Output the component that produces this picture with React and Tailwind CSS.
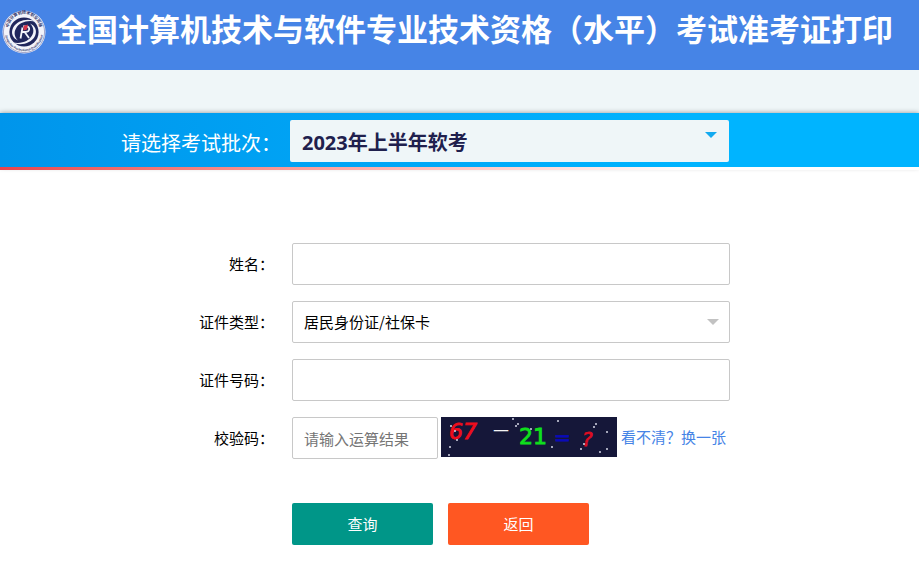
import { useState } from 'react';

const FIELD = 'block w-full h-[42px] rounded-xs border border-[#c8c8c8] bg-white px-[11px] text-black outline-none focus:border-[#8f8f8f] placeholder:text-[#757575]';

const STARS = [
  [72, 2], [77, 7], [75, 9], [10, 9], [14, 14], [16, 23], [9, 30], [8, 38],
  [117, 4], [90, 12], [111, 30], [155, 7], [153, 10], [166, 15], [143, 27],
  [140, 32], [159, 35], [166, 32],
];

function Emblem() {
  return (
    <svg viewBox="0 0 44 44" className="w-11 h-11 shrink-0" aria-hidden="true">
      <defs>
        <path id="ring-top" d="M7 24 A15.6 15.6 0 1 1 37 24" />
        <path id="ring-bottom" d="M2.8 22 A19.2 19.2 0 0 0 41.2 22" />
      </defs>
      <circle cx="22" cy="22" r="21.5" fill="#f2f3fa" />
      <circle cx="22" cy="22" r="20.6" fill="none" stroke="#7e84b4" strokeWidth="0.7" />
      <g fill="#33376b" fontFamily="'Noto Sans CJK SC', sans-serif" fontWeight="700">
        <text fontSize="4">
          <textPath href="#ring-top" startOffset="50%" textAnchor="middle">中国计算机技术职业资格</textPath>
        </text>
        <text fontSize="3">
          <textPath href="#ring-bottom" startOffset="50%" textAnchor="middle">Computer Professional Qualification</textPath>
        </text>
      </g>
      <circle cx="22" cy="22" r="14.6" fill="#20265c" />
      <path d="M34 12C27 7.500 15 10 11 18c-2.500 5.500 0 10.500 5 12.500-3.500-3.500-4.500-8-2-12C17 12.500 26 9.500 34 12z" fill="#f2f3fa" />
      <path d="M10 32C17 36.500 29 34 33 26c2.500-5.500 0-10.500-5-12.500 3.500 3.500 4.500 8 2 12C27 31.500 18 34.500 10 32z" fill="#f2f3fa" />
      <path d="M18.500 28.500l2-11M21 16.500h3.500c4 0 3.500 5.500-1 5.500h-3M23 22.500l4 5.500" fill="none" stroke="#f2f3fa" strokeWidth="1.800" />
      <path d="M21.500 16l4.500-1.500-1 5-3.500 1z" fill="#d8344a" />
    </svg>
  );
}

function Caret({ className }) {
  return (
    <svg viewBox="0 0 12 6" className={`pointer-events-none absolute w-3 h-[6px] ${className}`} aria-hidden="true">
      <path d="M0 0h12L6 6z" fill="currentColor" />
    </svg>
  );
}

function Captcha() {
  return (
    <svg viewBox="0 0 176 40" className="w-44 h-10 shrink-0" role="img" aria-label="67 - 21 = ?">
      <rect width="176" height="40" fill="#151739" />
      <g fontFamily="'DejaVu Sans', sans-serif" fontSize="22" strokeWidth="0.8">
        <text x="8" y="22" fill="#ee0d1c" stroke="#ee0d1c" fontStyle="italic">67</text>
        <text x="52" y="18" fontSize="16" fill="#f4f4f4">—</text>
        <text x="78" y="27" fill="#0fe01c" stroke="#0fe01c">21</text>
        <text x="113" y="27" fontSize="20" fill="#0a0ab8" stroke="#0a0ab8">=</text>
        <text x="141" y="29" fontSize="20" fill="#dd0d22" stroke="#dd0d22" fontStyle="italic">?</text>
      </g>
      {STARS.map(([x, y]) => (
        <circle key={`${x}-${y}`} cx={x} cy={y} r="1" fill="#d5d7e6" />
      ))}
    </svg>
  );
}

function Row({ id, label, children }) {
  return (
    <div className="flex">
      <label htmlFor={id} className="w-[274px] shrink-0 text-right leading-[42px]">{label}</label>
      <div className="ml-[18px] mr-4 flex-1 max-w-[438px] min-w-0">{children}</div>
    </div>
  );
}

export default function App() {
  const [batch, setBatch] = useState('2023-1');
  const [idType, setIdType] = useState('id');

  return (
    <div className="min-h-screen bg-white text-[15px] text-black font-['Noto_Sans_CJK_SC',sans-serif]">
      <header className="flex h-[70px] items-start bg-[#4684e6] pl-[2px] text-white">
        <div className="pt-[10px]"><Emblem /></div>
        <h1 className="ml-[10px] whitespace-nowrap text-[31px] font-bold leading-[56px]">
          全国计算机技术与软件专业技术资格（水平）考试准考证打印
        </h1>
      </header>
      <div className="h-[43px] bg-[#eff6f8]" />

      <section className="relative shadow-[0_0_5px_rgba(0,0,0,0.4)]">
        <div className="flex h-[54px] items-center bg-linear-to-r from-[#0095eb] to-[#00b4ff] to-75% pt-[2px]">
          <label htmlFor="batch" className="w-[281px] shrink-0 text-right text-xl text-white pt-1">请选择考试批次：</label>
          <div className="relative ml-[9px] mr-4 flex-1 max-w-[439px]">
            <select
              id="batch"
              value={batch}
              onChange={e => setBatch(e.target.value)}
              className="block w-full h-[42px] appearance-none rounded-xs bg-[#eff6f8] px-3 pt-1 text-xl font-bold text-[#20204d] outline-none font-['Open_Sans','Noto_Sans_CJK_SC',sans-serif]"
            >
              <option value="2023-1">2023年上半年软考</option>
            </select>
            <Caret className="right-3 top-3 text-[#12aaf0]" />
          </div>
        </div>
      </section>
      <div className="relative h-[3px] bg-linear-to-r from-[#e8424c] to-white to-75%" />

      <form className="flex flex-col gap-4 pt-[73px] pb-8" onSubmit={e => e.preventDefault()}>
        <Row id="name" label="姓名：">
          <input id="name" type="text" className={FIELD} />
        </Row>
        <Row id="idType" label="证件类型：">
          <div className="relative">
            <select
              id="idType"
              value={idType}
              onChange={e => setIdType(e.target.value)}
              className={`${FIELD} appearance-none`}
            >
              <option value="id">居民身份证/社保卡</option>
            </select>
            <Caret className="right-[11px] top-[18px] text-[#c2c2c2]" />
          </div>
        </Row>
        <Row id="idNo" label="证件号码：">
          <input id="idNo" type="text" className={FIELD} />
        </Row>
        <Row id="code" label="校验码：">
          <div className="flex items-start">
            <div className="w-[146px] shrink-0">
              <input id="code" type="text" placeholder="请输入运算结果" className={FIELD} />
            </div>
            <div className="ml-[3px]"><Captcha /></div>
            <a href="#refresh" className="ml-1 whitespace-nowrap leading-10 text-[#4684e6]">看不清？换一张</a>
          </div>
        </Row>
        <div className="mt-7 ml-[292px] flex gap-[15px] text-white">
          <button type="submit" className="h-[42px] w-[141px] rounded-xs bg-[#009688] cursor-pointer">查询</button>
          <button type="button" className="h-[42px] w-[141px] rounded-xs bg-[#ff5722] cursor-pointer">返回</button>
        </div>
      </form>
    </div>
  );
}
